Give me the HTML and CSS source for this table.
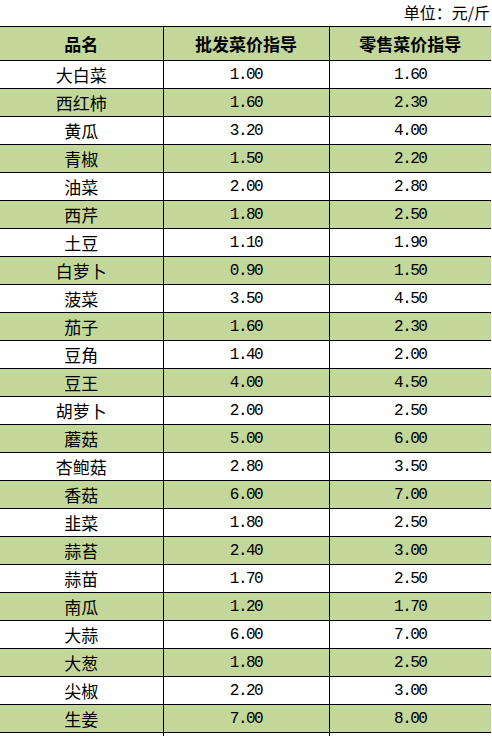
FILE: index.html
```html
<!DOCTYPE html>
<html lang="zh">
<head>
<meta charset="utf-8">
<title>菜价指导</title>
<link rel="stylesheet" href="styles.css">
</head>
<body>
<div class="unit">单位：元/斤</div>
<table class="price">
<colgroup><col class="c1"><col class="c2"><col class="c3"></colgroup>
<thead>
<tr><th>品名</th><th>批发菜价指导</th><th>零售菜价指导</th></tr>
</thead>
<tbody>
<tr><td>大白菜</td><td class="n">1.00</td><td class="n">1.60</td></tr>
<tr><td>西红柿</td><td class="n">1.60</td><td class="n">2.30</td></tr>
<tr><td>黄瓜</td><td class="n">3.20</td><td class="n">4.00</td></tr>
<tr><td>青椒</td><td class="n">1.50</td><td class="n">2.20</td></tr>
<tr><td>油菜</td><td class="n">2.00</td><td class="n">2.80</td></tr>
<tr><td>西芹</td><td class="n">1.80</td><td class="n">2.50</td></tr>
<tr><td>土豆</td><td class="n">1.10</td><td class="n">1.90</td></tr>
<tr><td>白萝卜</td><td class="n">0.90</td><td class="n">1.50</td></tr>
<tr><td>菠菜</td><td class="n">3.50</td><td class="n">4.50</td></tr>
<tr><td>茄子</td><td class="n">1.60</td><td class="n">2.30</td></tr>
<tr><td>豆角</td><td class="n">1.40</td><td class="n">2.00</td></tr>
<tr><td>豆王</td><td class="n">4.00</td><td class="n">4.50</td></tr>
<tr><td>胡萝卜</td><td class="n">2.00</td><td class="n">2.50</td></tr>
<tr><td>蘑菇</td><td class="n">5.00</td><td class="n">6.00</td></tr>
<tr><td>杏鲍菇</td><td class="n">2.80</td><td class="n">3.50</td></tr>
<tr><td>香菇</td><td class="n">6.00</td><td class="n">7.00</td></tr>
<tr><td>韭菜</td><td class="n">1.80</td><td class="n">2.50</td></tr>
<tr><td>蒜苔</td><td class="n">2.40</td><td class="n">3.00</td></tr>
<tr><td>蒜苗</td><td class="n">1.70</td><td class="n">2.50</td></tr>
<tr><td>南瓜</td><td class="n">1.20</td><td class="n">1.70</td></tr>
<tr><td>大蒜</td><td class="n">6.00</td><td class="n">7.00</td></tr>
<tr><td>大葱</td><td class="n">1.80</td><td class="n">2.50</td></tr>
<tr><td>尖椒</td><td class="n">2.20</td><td class="n">3.00</td></tr>
<tr><td>生姜</td><td class="n">7.00</td><td class="n">8.00</td></tr>
<tr><td></td><td class="n"></td><td class="n"></td></tr>
</tbody>
</table>
</body>
</html>
```
FILE: styles.css
```css
html, body {
  margin: 0;
  padding: 0;
  background: #ffffff;
}
body {
  width: 492px;
  height: 736px;
  overflow: hidden;
  font-family: "Noto Sans CJK SC", "Liberation Sans", sans-serif;
  color: #000;
}
.unit {
  height: 26px;
  line-height: 24px;
  font-size: 16px;
  text-align: right;
  padding-right: 2px;
  box-sizing: border-box;
}
.price {
  border-collapse: collapse;
  table-layout: fixed;
  width: 491px;
}
.c1 { width: 163px; }
.c2 { width: 166px; }
.c3 { width: 162px; }
.price th,
.price td {
  padding: 0;
  text-align: center;
  border-top: 1px solid #000;
  border-bottom: 1px solid #000;
  border-left: 1px solid #000;
  overflow: hidden;
  white-space: nowrap;
}
.price th:first-child,
.price td:first-child {
  border-left: none;
}
.price thead tr {
  height: 34px;
  background: #c4d79b;
}
.price th {
  font-size: 17px;
  font-weight: bold;
}
.price tbody tr {
  height: 28px;
}
.price td {
  font-size: 17px;
}
.price tbody tr:nth-child(even) {
  background: #c4d79b;
}
.price td.n {
  font-family: "Liberation Mono", "DejaVu Sans Mono", monospace;
  font-size: 16px;
  letter-spacing: -1.5px;
}
```
